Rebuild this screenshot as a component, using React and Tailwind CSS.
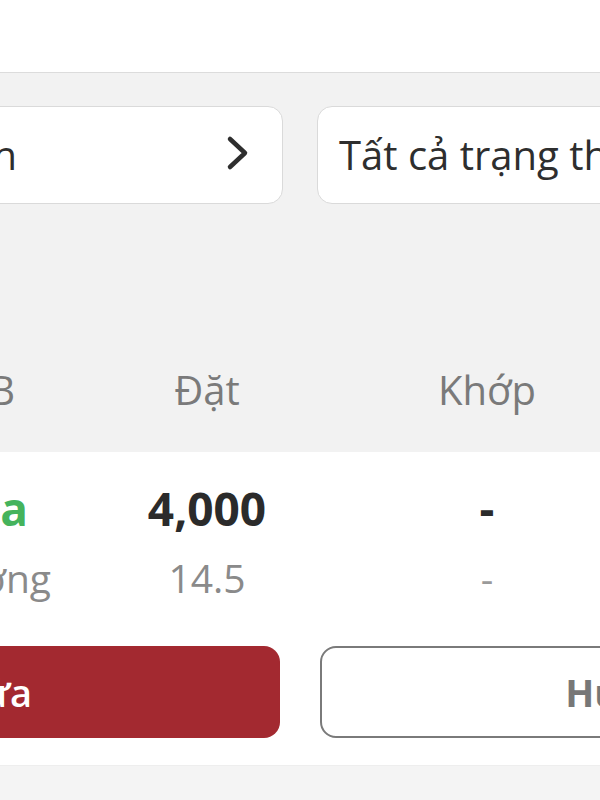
import React from "react";

export default function App() {
  return (
    <div className="w-[600px] h-[800px] overflow-hidden bg-white font-['Open_Sans',sans-serif] relative">
      {/* top bar */}
      <div className="h-[73px] bg-white border-b border-[#dcdcdc]" />

      {/* gray filter + header area */}
      <div className="bg-[#f2f2f2] pt-[33px]">
        <div className="flex gap-[34px] -ml-[283px]">
          <div className="w-[566px] h-[98px] shrink-0 bg-white border border-[#dadada] rounded-[15px] flex items-center pr-[32px]">
            <div className="w-[299px] shrink-0 flex justify-end">
              <span className="whitespace-nowrap text-[40px] text-[#2e2e2e]">Tất cả thời gian</span>
            </div>
            <div className="flex-1" />
            <svg width="24" height="40" viewBox="0 0 24 40" className="shrink-0">
              <polyline points="4,4 19,18 4,32" fill="none" stroke="#2e2e2e" strokeWidth="4.5" strokeLinecap="round" strokeLinejoin="round" />
            </svg>
          </div>
          <div className="w-[566px] h-[98px] shrink-0 bg-white border border-[#dadada] rounded-[15px] flex items-center pl-[21px]">
            <span className="whitespace-nowrap text-[40px] text-[#2e2e2e]">Tất cả trạng thái</span>
          </div>
        </div>

        {/* table header */}
        <div className="mt-[136px] h-[112px] pb-[12px] flex items-center text-[40px] text-[#7a7a7a]">
          <div className="w-[67px] shrink-0 flex justify-end pr-[52px]">
            <span className="whitespace-nowrap">Lệnh/GB</span>
          </div>
          <div className="w-[280px] shrink-0 text-center">Đặt</div>
          <div className="w-[280px] shrink-0 text-center">Khớp</div>
        </div>
      </div>

      {/* data row */}
      <div className="bg-white pt-[26px]">
        <div className="flex items-center h-[60px] text-[46px] font-bold text-[#2b2b2b]">
          <div className="w-[67px] shrink-0 flex justify-end pr-[39px]">
            <span className="whitespace-nowrap text-[#45b35c]">Mua</span>
          </div>
          <div className="w-[280px] shrink-0 text-center">4,000</div>
          <div className="w-[280px] shrink-0 text-center">-</div>
        </div>
        <div className="mt-[15px] flex items-center h-[50px] text-[39px] text-[#8a8a8a]">
          <div className="w-[67px] shrink-0 flex justify-end pr-[16px]">
            <span className="whitespace-nowrap">Thường</span>
          </div>
          <div className="w-[280px] shrink-0 text-center">14.5</div>
          <div className="w-[280px] shrink-0 text-center text-[#9a9a9a]">-</div>
        </div>

        {/* buttons */}
        <div className="mt-[43px] flex gap-[40px] -ml-[286px]">
          <div className="w-[566px] h-[92px] shrink-0 rounded-[16px] bg-[#a32930] flex items-center justify-center text-[38px] font-semibold text-white">
            Sửa
          </div>
          <div className="w-[566px] h-[92px] shrink-0 rounded-[16px] border-2 border-[#7a7a7a] bg-white flex items-center justify-center text-[38px] font-bold text-[#777777]">
            Hủy
          </div>
        </div>

        <div className="h-[27px]" />
      </div>
      <div className="h-[40px] bg-[#f4f4f4] border-t border-[#eeeeee]" />
    </div>
  );
}
